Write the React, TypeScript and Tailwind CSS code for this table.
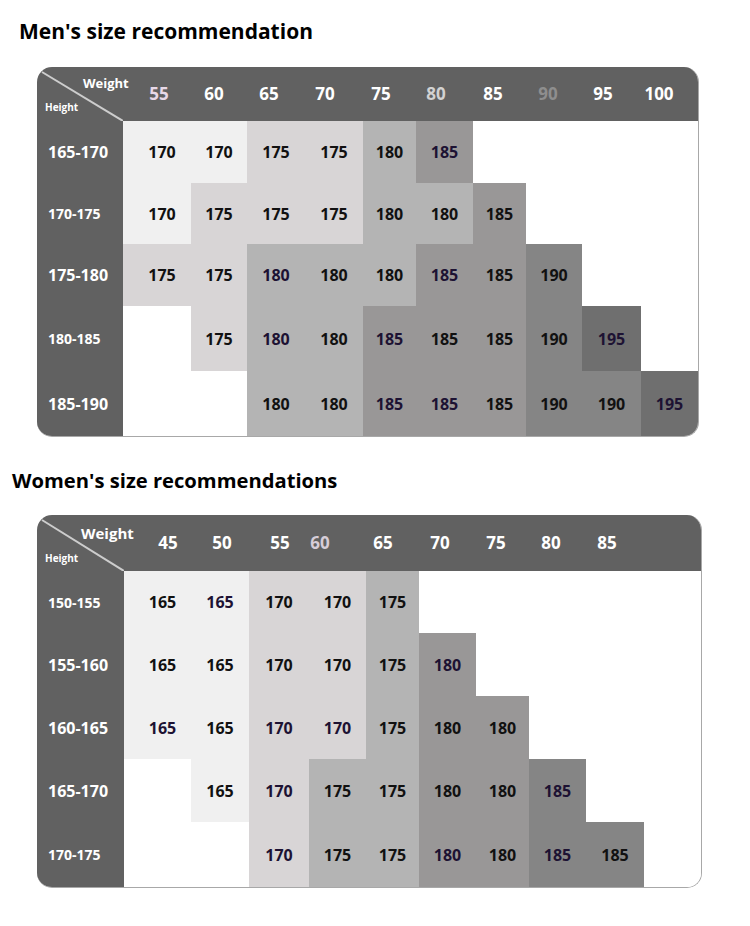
const FONT = { fontFamily: "'Open Sans', 'Liberation Sans', sans-serif" };

const bgClass: Record<string, string> = {
  L: "bg-[#f0f0f0]",
  P: "bg-[#d8d5d6]",
  M: "bg-[#b4b4b4]",
  D: "bg-[#999797]",
  E: "bg-[#858585]",
  F: "bg-[#6f6f6f]",
};

type Table = {
  title: string;
  titleClass: string;
  headerH: string;
  labelW: string;
  corner: { weight: string; height: string; line: [number, number, number, number] };
  heads: { label: string; cls: string }[];
  widths: string[];
  rows: { label: string; big: boolean; h: string; cells: string[] }[];
};

// cell code: "value:color" or "" for empty; trailing "!" = purple ink
const men: Table = {
  title: "Men's size recommendation",
  titleClass: "pl-[19px] pt-[21px] text-[21px]",
  headerH: "h-[54px]",
  labelW: "w-[86px]",
  corner: {
    weight: "ml-[46px] mt-[10px] text-[13px]",
    height: "ml-[8px] mt-[12px] text-[10px]",
    line: [5, 5, 86, 54],
  },
  heads: [
    { label: "55", cls: "ml-[16px] text-[#e8d9e8]" },
    { label: "60", cls: "ml-[15px] text-white" },
    { label: "65", cls: "ml-[15px] text-white" },
    { label: "70", cls: "ml-[16px] text-white" },
    { label: "75", cls: "ml-[16px] text-white" },
    { label: "80", cls: "ml-[15px] text-[#d2d2d2]" },
    { label: "85", cls: "ml-[17px] text-white" },
    { label: "90", cls: "ml-[15px] text-[#8e8e8e]" },
    { label: "95", cls: "ml-[15px] text-white" },
    { label: "100", cls: "ml-[16px] text-white" },
  ],
  widths: ["w-[68px]", "w-[56px]", "w-[58px]", "w-[58px]", "w-[53px]", "w-[57px]", "w-[53px]", "w-[56px]", "w-[59px]", "w-[57px]"],
  rows: [
    { label: "165-170", big: true, h: "h-[62px]", cells: ["170:L", "170:L", "175:P", "175:P", "180:M", "185:D!", "", "", "", ""] },
    { label: "170-175", big: false, h: "h-[61px]", cells: ["170:L", "175:P", "175:P", "175:P", "180:M", "180:M", "185:D", "", "", ""] },
    { label: "175-180", big: true, h: "h-[62px]", cells: ["175:P", "175:P", "180:M!", "180:M", "180:M", "185:D!", "185:D", "190:E", "", ""] },
    { label: "180-185", big: false, h: "h-[65px]", cells: ["", "175:P", "180:M!", "180:M", "185:D!", "185:D", "185:D", "190:E", "195:F!", ""] },
    { label: "185-190", big: true, h: "h-[65px]", cells: ["", "", "180:M", "180:M", "185:D!", "185:D!", "185:D", "190:E", "190:E", "195:F!"] },
  ],
};

const women: Table = {
  title: "Women's size recommendations",
  titleClass: "pl-[12px] pt-[27px] text-[20.2px]",
  headerH: "h-[56px]",
  labelW: "w-[87px]",
  corner: {
    weight: "ml-[44px] mt-[11px] text-[15px]",
    height: "ml-[8px] mt-[12px] text-[10px]",
    line: [5, 5, 87, 56],
  },
  heads: [
    { label: "45", cls: "ml-[24px] text-white" },
    { label: "50", cls: "ml-[14px] text-white" },
    { label: "55", cls: "ml-[18px] text-white" },
    { label: "60", cls: "ml-[0px] text-[#d6cdd8]" },
    { label: "65", cls: "ml-[23px] text-white" },
    { label: "70", cls: "ml-[17px] text-white" },
    { label: "75", cls: "ml-[16px] text-white" },
    { label: "80", cls: "ml-[15px] text-white" },
    { label: "85", cls: "ml-[16px] text-white" },
  ],
  widths: ["w-[67px]", "w-[58px]", "w-[60px]", "w-[57px]", "w-[53px]", "w-[57px]", "w-[53px]", "w-[57px]", "w-[58px]", "w-[57px]"],
  rows: [
    { label: "150-155", big: false, h: "h-[62px]", cells: ["165:L", "165:L!", "170:P", "170:P", "175:M", "", "", "", "", ""] },
    { label: "155-160", big: true, h: "h-[63px]", cells: ["165:L", "165:L", "170:P", "170:P", "175:M", "180:D!", "", "", "", ""] },
    { label: "160-165", big: true, h: "h-[63px]", cells: ["165:L!", "165:L", "170:P!", "170:P!", "175:M", "180:D", "180:D", "", "", ""] },
    { label: "165-170", big: true, h: "h-[63px]", cells: ["", "165:L", "170:P!", "175:M", "175:M", "180:D", "180:D", "185:E!", "", ""] },
    { label: "170-175", big: false, h: "h-[65px]", cells: ["", "", "170:P!", "175:M", "175:M", "180:D!", "180:D", "185:E!", "185:E", ""] },
  ],
};

function Corner({ t }: { t: Table }) {
  const [x1, y1, x2, y2] = t.corner.line;
  return (
    <div className={`relative flex h-full shrink-0 flex-col ${t.labelW}`}>
      <svg className="absolute inset-0 h-full w-full" viewBox={`0 0 ${x2} ${y2}`} preserveAspectRatio="none">
        <line x1={x1} y1={y1} x2={x2} y2={y2} stroke="#cdcdcd" strokeWidth="2" />
      </svg>
      <span className={`relative font-bold leading-none text-white ${t.corner.weight}`}>Weight</span>
      <span className={`relative font-bold leading-none text-white ${t.corner.height}`}>Height</span>
    </div>
  );
}

function SizeTable({ t }: { t: Table }) {
  return (
    <section>
      <h2 className={`font-bold leading-none text-black ${t.titleClass}`}>{t.title}</h2>
      <div className="pl-[37px] pt-[25px]">
        <div className="inline-block overflow-hidden rounded-[15px] border-r border-b border-[#a8a8a8] bg-white">
          <div className={`flex items-stretch bg-[#616161] ${t.headerH}`}>
            <Corner t={t} />
            <div className="flex items-center">
              {t.heads.map((h) => (
                <span key={h.label} className={`w-[40px] text-center text-[17px] font-bold ${h.cls}`}>
                  {h.label}
                </span>
              ))}
            </div>
          </div>
          {t.rows.map((r) => (
            <div key={r.label} className={`flex ${r.h}`}>
              <div
                className={`flex shrink-0 items-center bg-[#616161] pl-[11px] font-bold text-white ${t.labelW} ${
                  r.big ? "text-[16px]" : "text-[14px]"
                }`}
              >
                {r.label}
              </div>
              {r.cells.map((c, i) => {
                if (!c) return <div key={i} className={`shrink-0 bg-white ${t.widths[i]}`} />;
                const purple = c.endsWith("!");
                const [v, col] = c.replace("!", "").split(":");
                return (
                  <div
                    key={i}
                    className={`flex shrink-0 items-center justify-center text-[16px] font-bold ${t.widths[i]} ${bgClass[col]} ${
                      i === 0 ? "pl-[10px]" : ""
                    } ${purple ? "text-[#1d1233]" : "text-[#111111]"}`}
                  >
                    {v}
                  </div>
                );
              })}
            </div>
          ))}
        </div>
      </div>
    </section>
  );
}

export default function App() {
  return (
    <div className="h-[926px] w-[750px] bg-white" style={FONT}>
      <SizeTable t={men} />
      <SizeTable t={women} />
    </div>
  );
}
